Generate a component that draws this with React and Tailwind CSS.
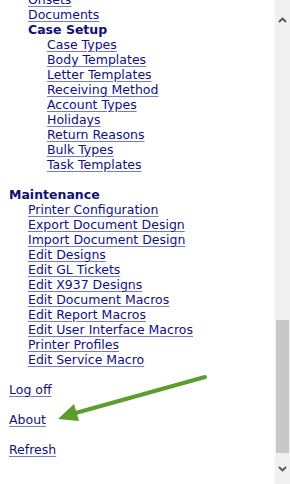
import React from 'react';

const caseSetup = [
  'Case Types',
  'Body Templates',
  'Letter Templates',
  'Receiving Method',
  'Account Types',
  'Holidays',
  'Return Reasons',
  'Bulk Types',
  'Task Templates',
];

const maintenance = [
  'Printer Configuration',
  'Export Document Design',
  'Import Document Design',
  'Edit Designs',
  'Edit GL Tickets',
  'Edit X937 Designs',
  'Edit Document Macros',
  'Edit Report Macros',
  'Edit User Interface Macros',
  'Printer Profiles',
  'Edit Service Macro',
];

function NavLink({ children }) {
  return (
    <a href="#" className="block h-[15px] leading-[15px] w-fit text-[#101080] underline decoration-[#7a7ac0] underline-offset-2">
      {children}
    </a>
  );
}

export default function App() {
  return (
    <div className="relative flex h-[484px] w-[290px] overflow-hidden bg-white font-['DejaVu_Sans','Verdana',sans-serif] text-[12.5px]">
      {/* menu content, scrolled down */}
      <div className="flex-1 pl-[9px] -mt-[8px]">
        <div className="pl-[19px]">
          <NavLink>Onsets</NavLink>
          <NavLink>Documents</NavLink>
          <div className="h-[15px] leading-[15px] font-bold text-[#101070]">Case Setup</div>
          <div className="pl-[19px]">
            {caseSetup.map((item) => (
              <NavLink key={item}>{item}</NavLink>
            ))}
          </div>
        </div>

        <div className="mt-[15px] h-[15px] leading-[15px] font-bold text-[#101070]">Maintenance</div>
        <div className="pl-[19px]">
          {maintenance.map((item) => (
            <NavLink key={item}>{item}</NavLink>
          ))}
        </div>

        <div className="mt-[15px] flex flex-col gap-[15px]">
          <NavLink>Log off</NavLink>
          <NavLink>About</NavLink>
          <NavLink>Refresh</NavLink>
        </div>
      </div>

      {/* scrollbar */}
      <div className="flex w-[15px] flex-col bg-[#f0f0f0]">
        <div className="flex h-[40px] items-center justify-center">
          <svg width="9" height="6" viewBox="0 0 9 6">
            <path d="M1 5 L4.5 1.5 L8 5" fill="none" stroke="#555" strokeWidth="1.8" />
          </svg>
        </div>
        <div className="flex-1" />
        <div className="mx-[1px] h-[133px] bg-[#c8c8c8]" />
        <div className="flex h-[31px] items-center justify-center">
          <svg width="9" height="6" viewBox="0 0 9 6">
            <path d="M1 1 L4.5 4.5 L8 1" fill="none" stroke="#555" strokeWidth="1.8" />
          </svg>
        </div>
      </div>

      {/* annotation arrow */}
      <svg className="pointer-events-none absolute left-0 top-0" width="290" height="484">
        <line x1="205" y1="377" x2="72" y2="414" stroke="#5b9e2b" strokeWidth="4" strokeLinecap="round" />
        <polygon points="58,419 74,404 79,421" fill="#5b9e2b" />
      </svg>
    </div>
  );
}
